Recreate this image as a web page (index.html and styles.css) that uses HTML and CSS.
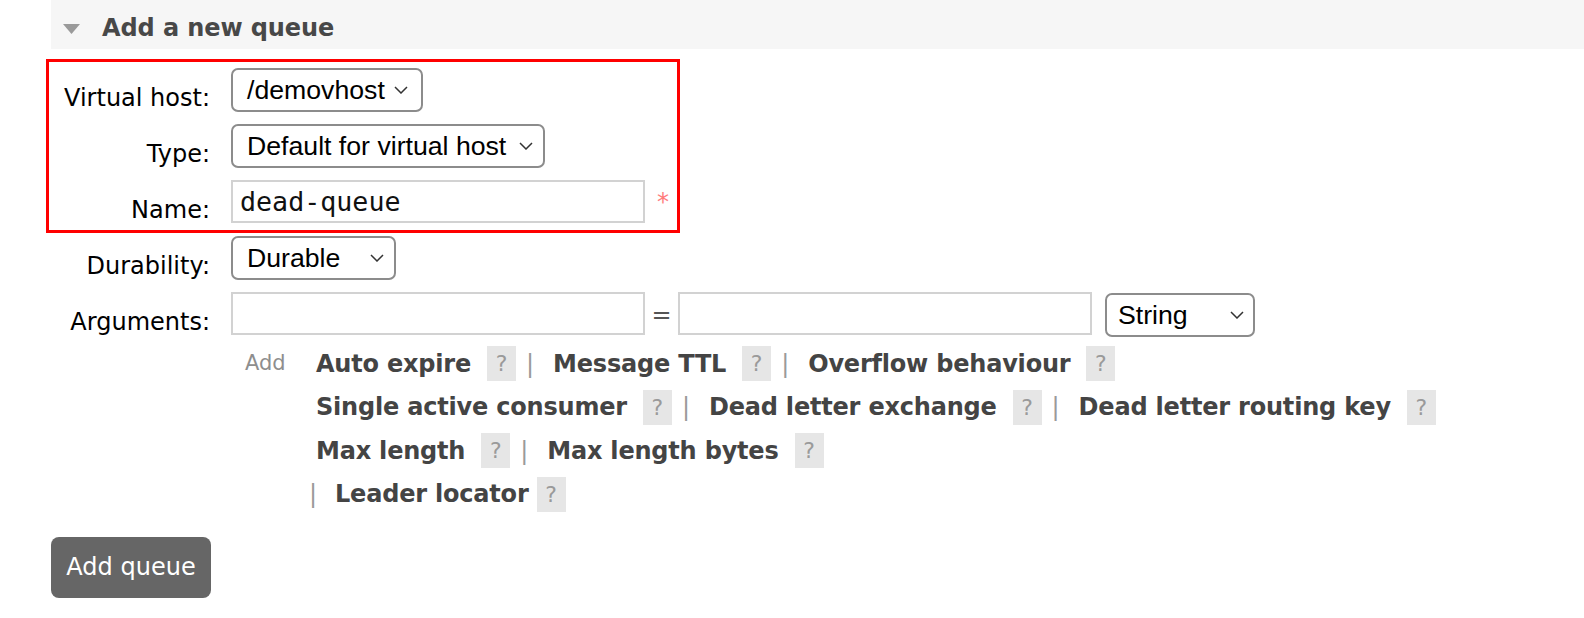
FILE: index.html
```html
<!DOCTYPE html>
<html lang="en">
<head>
<meta charset="utf-8">
<title>Add a new queue</title>
<link rel="stylesheet" href="styles.css">
</head>
<body>
<div class="page">
  <div class="section-header">
    <svg class="toggle" width="17" height="10" viewBox="0 0 17 10"><polygon points="0,0 17,0 8.5,10" fill="#9a9a9a"/></svg>
    <h2 class="title">Add a new queue</h2>
  </div>

  <div class="form">
    <div class="boxed">
      <div class="row">
        <div class="label">Virtual host:</div>
        <div class="select w-vhost"><span>/demovhost</span><svg class="chev" width="14" height="8" viewBox="0 0 14 8"><polyline points="1,1 7,7 13,1" fill="none" stroke="#333" stroke-width="1.5"/></svg></div>
      </div>
      <div class="row">
        <div class="label">Type:</div>
        <div class="select w-type"><span>Default for virtual host</span><svg class="chev" width="14" height="8" viewBox="0 0 14 8"><polyline points="1,1 7,7 13,1" fill="none" stroke="#333" stroke-width="1.5"/></svg></div>
      </div>
      <div class="row">
        <div class="label">Name:</div>
        <div class="input"><span class="value">dead-queue</span></div>
        <span class="required">*</span>
      </div>
    </div>

    <div class="row">
      <div class="label">Durability:</div>
      <div class="select w-dur"><span>Durable</span><svg class="chev" width="14" height="8" viewBox="0 0 14 8"><polyline points="1,1 7,7 13,1" fill="none" stroke="#333" stroke-width="1.5"/></svg></div>
    </div>

    <div class="row">
      <div class="label">Arguments:</div>
      <div class="input"></div>
      <span class="equals">=</span>
      <div class="input"></div>
      <div class="select w-str"><span>String</span><svg class="chev" width="14" height="8" viewBox="0 0 14 8"><polyline points="1,1 7,7 13,1" fill="none" stroke="#333" stroke-width="1.5"/></svg></div>
    </div>

    <div class="help-row">
      <div class="add">Add</div>
      <div class="links">
        <div class="line">
          <span class="arg">Auto expire</span><span class="help">?</span><span class="pipe">|</span>
          <span class="arg after">Message TTL</span><span class="help">?</span><span class="pipe">|</span>
          <span class="arg after">Overflow behaviour</span><span class="help">?</span>
        </div>
        <div class="line">
          <span class="arg">Single active consumer</span><span class="help">?</span><span class="pipe">|</span>
          <span class="arg after">Dead letter exchange</span><span class="help">?</span><span class="pipe">|</span>
          <span class="arg after">Dead letter routing key</span><span class="help">?</span>
        </div>
        <div class="line">
          <span class="arg">Max length</span><span class="help">?</span><span class="pipe">|</span>
          <span class="arg after">Max length bytes</span><span class="help">?</span>
        </div>
        <div class="line line-last">
          <span class="pipe first">|</span>
          <span class="arg after-first">Leader locator</span><span class="help tight">?</span>
        </div>
      </div>
    </div>
  </div>

  <button class="btn">Add queue</button>
</div>
</body>
</html>
```
FILE: styles.css
```css
html, body {
  margin: 0;
  padding: 0;
  background: #ffffff;
}

body {
  font-family: "DejaVu Sans", Verdana, sans-serif;
  font-size: 24px;
  color: #000;
}

.page {
  padding-left: 51px;
}

.section-header {
  height: 49px;
  box-sizing: border-box;
  padding-top: 7px;
  background: #f6f6f6;
  display: flex;
  align-items: center;
  padding-left: 12px;
}

.toggle {
  display: block;
  margin-top: 1px;
}

.title {
  margin: 0 0 0 22px;
  font-size: 24px;
  font-weight: bold;
  color: #484848;
  line-height: 28px;
  letter-spacing: -0.1px;
}

.form {
  margin-top: 10px;
  display: flex;
  flex-direction: column;
}

.boxed {
  margin-left: -5px;
  width: 634px;
  box-sizing: border-box;
  border: 3px solid #ff0000;
  padding: 6px 0 6px 2px;
  display: flex;
  flex-direction: column;
  gap: 12px;
  margin-bottom: 3px;
}

.form > .row {
  margin-bottom: 12px;
}

.row {
  display: flex;
  align-items: flex-start;
  height: 44px;
}

.label {
  width: 159px;
  text-align: right;
  line-height: 28px;
  padding-top: 16px;
  white-space: nowrap;
  margin-right: 21px;
  flex: none;
}

.select {
  height: 44px;
  box-sizing: border-box;
  border: 2px solid #8c8c8c;
  border-radius: 7px;
  background: #fff;
  display: flex;
  align-items: center;
  justify-content: space-between;
  padding: 0 11px 0 14px;
  font-family: "Liberation Sans", Arial, sans-serif;
  font-size: 26.67px;
  color: #000;
  flex: none;
}

.chev {
  display: block;
  flex: none;
}

.w-vhost { width: 192px; padding-right: 13px; }
.w-type { width: 314px; padding-right: 10px; }
.w-dur { width: 165px; padding-right: 10px; }
.w-str { width: 150px; margin-left: 13px; margin-top: 1px; padding-right: 9px; padding-left: 11px; }

.input {
  width: 414px;
  height: 43px;
  box-sizing: border-box;
  border: 2px solid #d2d2d2;
  background: #fff;
  display: flex;
  align-items: center;
  padding-left: 7px;
  flex: none;
}

.value {
  font-family: "DejaVu Sans Mono", Menlo, monospace;
  font-size: 26.67px;
  color: #111;
}

.required {
  color: #ff7b7b;
  margin-left: 12px;
  font-size: 24px;
  line-height: 28px;
  padding-top: 8px;
}

.equals {
  color: #555;
  width: 33px;
  text-align: center;
  line-height: 28px;
  padding-top: 9px;
  flex: none;
}

.help-row {
  display: flex;
  padding-left: 180px;
  margin-top: -6px;
}

.add {
  width: 85px;
  box-sizing: border-box;
  padding-left: 14px;
  font-size: 21px;
  color: #8e8e8e;
  line-height: 26px;
  padding-top: 8px;
  flex: none;
}

.links {
  display: flex;
  flex-direction: column;
}

.line {
  display: flex;
  align-items: center;
  height: 43.5px;
  white-space: nowrap;
}

.arg {
  font-weight: bold;
  color: #444;
  line-height: 28px;
  letter-spacing: -0.2px;
}

.arg.after { margin-left: 19px; }
.arg.after-first { margin-left: 18px; }

.help {
  display: inline-flex;
  align-items: center;
  justify-content: center;
  width: 29px;
  height: 35px;
  background: #e6e6e6;
  color: #9a9a9a;
  font-size: 22px;
  margin-left: 16px;
}

.help.tight { margin-left: 8px; }

.pipe {
  color: #9a9a9a;
  width: 8px;
  text-align: center;
  margin-left: 10px;
  line-height: 28px;
}

.pipe.first { margin-left: -7px; }

.btn {
  margin-top: 21px;
  display: block;
  width: 160px;
  height: 61px;
  border: none;
  border-radius: 8px;
  background: #666;
  color: #fff;
  font-family: "DejaVu Sans", Verdana, sans-serif;
  font-size: 24px;
  padding: 0;
  line-height: 61px;
  cursor: pointer;
}
```
